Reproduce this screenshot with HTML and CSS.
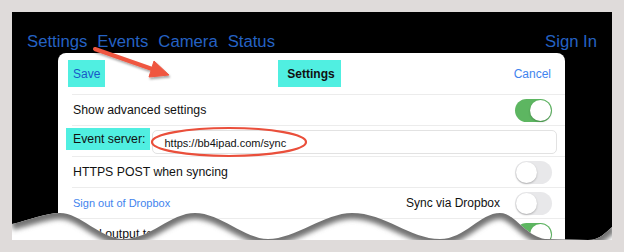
FILE: index.html
```html
<!DOCTYPE html>
<html lang="en">
<head>
    <meta charset="UTF-8">
    <title>Settings</title>
    <link rel="stylesheet" href="styles.css">
</head>
<body>
    <div class="shot">
        <div class="screen">
            <nav class="tabs">
                <div class="tab-group">
                    <span class="tab">Settings</span>
                    <span class="tab">Events</span>
                    <span class="tab">Camera</span>
                    <span class="tab">Status</span>
                </div>
                <span class="tab">Sign In</span>
            </nav>

            <div class="sheet">
                <header class="sheet-head">
                    <span class="head-left"><span class="mark save">Save</span></span>
                    <span class="mark title">Settings</span>
                    <span class="head-right"><span class="cancel">Cancel</span></span>
                </header>

                <div class="row">
                    <span>Show advanced settings</span>
                    <span class="switch on"></span>
                </div>
                <div class="row">
                    <span class="mark field-label">Event server:</span>
                    <div class="field">https://bb4ipad.com/sync</div>
                </div>
                <div class="row">
                    <span>HTTPS POST when syncing</span>
                    <span class="switch"></span>
                </div>
                <div class="row">
                    <span class="link">Sign out of Dropbox</span>
                    <span class="row-end">
                        <span>Sync via Dropbox</span>
                        <span class="switch"></span>
                    </span>
                </div>
                <div class="row">
                    <span>Send output to Dropbox</span>
                    <span class="switch on"></span>
                </div>
            </div>
        </div>

        <!-- annotations and torn bottom edge -->
        <svg class="overlay" width="624" height="252" viewBox="0 0 624 252">
            <defs>
                <filter id="soft" x="-20%" y="-50%" width="140%" height="200%">
                    <feGaussianBlur stdDeviation="2.4"/>
                </filter>
                <filter id="drop" x="-20%" y="-50%" width="140%" height="200%">
                    <feDropShadow dx="1" dy="2" stdDeviation="1.2" flood-color="#000" flood-opacity="0.35"/>
                </filter>
                <clipPath id="paper">
                    <path d="M12,224 C30,220 45,213 60,213 C80,213 100,238 122,239 C150,240 170,213 195,213 C220,213 245,239 268,239 C295,239 325,213 352,213 C385,213 410,239 440,239 C465,239 480,213 500,213 C515,213 525,236 545,239 L588,240 C600,240 606,232 612,227 L612,240 L12,240 Z"/>
                </clipPath>
            </defs>

            <g filter="url(#drop)" fill="#ef5641" stroke="#ef5641">
                <line x1="95" y1="49" x2="155" y2="70" stroke-width="4" stroke-linecap="round"/>
                <polygon points="169,75 154,61 149,77" stroke-width="1" stroke-linejoin="round"/>
            </g>
            <ellipse cx="229" cy="142" rx="77" ry="14" fill="none" stroke="#ea4f3b" stroke-width="2.2"/>

            <path fill="#fff" d="M12,224 C30,220 45,213 60,213 C80,213 100,238 122,239 C150,240 170,213 195,213 C220,213 245,239 268,239 C295,239 325,213 352,213 C385,213 410,239 440,239 C465,239 480,213 500,213 C515,213 525,236 545,239 L588,240 C600,240 606,232 612,227 L612,240 L12,240 Z"/>
            <g clip-path="url(#paper)">
                <path filter="url(#soft)" fill="none" stroke="#727272" stroke-width="12" d="M12,224 C30,220 45,213 60,213 C80,213 100,238 122,239 C150,240 170,213 195,213 C220,213 245,239 268,239 C295,239 325,213 352,213 C385,213 410,239 440,239 C465,239 480,213 500,213 C515,213 525,236 545,239 L588,240 C600,240 606,232 612,227"/>
            </g>
        </svg>
    </div>
</body>
</html>
```

FILE: styles.css
```css
body {
    margin: 0;
    background-color: #dfdbda;
    font-family: "Liberation Sans", Arial, sans-serif;
}

.shot {
    position: relative;
    width: 624px;
    height: 252px;
    padding: 12px 12px 0 12px;
    box-sizing: border-box;
}

.screen {
    height: 228px;
    background-color: #000;
    overflow: hidden;
}

.tabs {
    display: flex;
    justify-content: space-between;
    height: 41px;
    padding: 21px 15px 0 15px;
    box-sizing: border-box;
    font-size: 16.7px;
    line-height: 18px;
    color: #2562c4;
}

.tab-group {
    display: flex;
    gap: 10px;
}

.sheet {
    margin: 0 47px 0 46px;
    height: 240px;
    background-color: #fff;
    border-radius: 8px 8px 0 0;
    font-size: 12.3px;
    color: #111;
}

.sheet-head {
    display: grid;
    grid-template-columns: 1fr auto 1fr;
    align-items: center;
    height: 41px;
    padding: 0 14px 0 10px;
}

.mark {
    background-color: #50efe1;
    padding: 0 5px;
    height: 27px;
    display: inline-flex;
    align-items: center;
}

.save {
    color: #1858c8;
    font-size: 12px;
}

.title {
    font-weight: bold;
    font-size: 12px;
    padding: 0 6px 0 9px;
}

.head-right {
    text-align: right;
}

.cancel {
    color: #3f84ee;
    font-size: 12px;
}

.row {
    display: flex;
    align-items: center;
    justify-content: space-between;
    height: 31px;
    box-sizing: border-box;
    margin-left: 14px;
    padding: 0 13px 0 1px;
    border-top: 1px solid #ececec;
}

.field-label {
    height: 22px;
    margin: 0 0 4px -7px;
    padding: 0 5px 0 7px;
    font-size: 12.3px;
}

.field {
    flex: 1;
    height: 24px;
    margin: 2px -5px 0 2px;
    padding-left: 11px;
    border: 1px solid #e2e2e2;
    border-radius: 5px;
    font-size: 11px;
    line-height: 24px;
    box-sizing: border-box;
}

.link {
    color: #3f84ee;
    font-size: 11px;
}

.row-end {
    display: flex;
    align-items: center;
    gap: 15px;
    font-size: 12px;
}

.switch {
    position: relative;
    flex: none;
    width: 37px;
    height: 23px;
    border-radius: 12px;
    background-color: #e8e8ea;
}

.switch::after {
    content: "";
    position: absolute;
    top: 1px;
    left: 1px;
    width: 21px;
    height: 21px;
    border-radius: 50%;
    background-color: #fff;
    box-shadow: 0 1px 2px rgba(0, 0, 0, 0.25);
}

.switch.on {
    background-color: #5db661;
}

.switch.on::after {
    left: 15px;
}

.overlay {
    position: absolute;
    top: 0;
    left: 0;
    pointer-events: none;
}
```
